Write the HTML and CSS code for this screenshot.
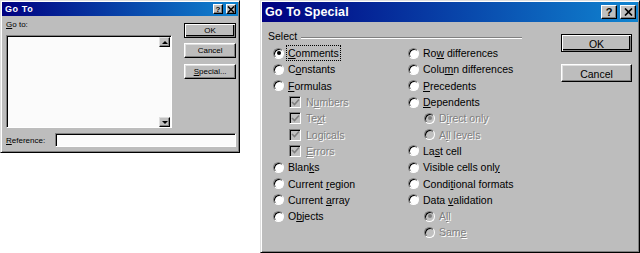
FILE: index.html
```html
<!doctype html>
<html lang="en">
<head>
  <title>Go To / Go To Special</title>
  <meta charset="utf-8">
  <link rel="stylesheet" href="styles.css">
</head>
<body>

<div class="screen">

  <div class="dlg goto">
    <div class="titlebar small-title">
      <span class="title">Go To</span>
      <span class="caps">
        <span class="cap help">?</span>
        <span class="cap"><svg width="8" height="7" viewBox="0 0 8 7"><path d="M1 0.5 L7 6.5 M7 0.5 L1 6.5" stroke="#000" stroke-width="1.6"/></svg></span>
      </span>
    </div>
    <div class="goto-body">
      <div class="goto-main">
        <div class="lbl"><u>G</u>o to:</div>
        <div class="listbox">
          <div class="list-area"></div>
          <div class="vscroll">
            <span class="sbtn"><span class="tri up"></span></span>
            <span class="track"></span>
            <span class="sbtn"><span class="tri down"></span></span>
          </div>
        </div>
      </div>
      <div class="btns small-btns">
        <div class="btn default">OK</div>
        <div class="btn">Cancel</div>
        <div class="btn"><u>S</u>pecial...</div>
      </div>
    </div>
    <div class="ref-row">
      <span class="ref-lbl"><u>R</u>eference:</span>
      <div class="field"></div>
    </div>
  </div>

  <div class="dlg special">
    <div class="titlebar big-title">
      <span class="title">Go To Special</span>
      <span class="caps">
        <span class="cap help">?</span>
        <span class="cap"><svg width="9" height="8" viewBox="0 0 9 8"><path d="M1 0.5 L8 7.5 M8 0.5 L1 7.5" stroke="#000" stroke-width="1.7"/></svg></span>
      </span>
    </div>
    <div class="special-body">
      <div class="select">
        <div class="group-head"><span>Select</span><span class="rule"></span></div>
        <div class="cols">
          <div class="col first">
            <div class="opt"><span class="radio on"></span><span class="focus"><u>C</u>omments</span></div>
            <div class="opt"><span class="radio"></span><span>C<u>o</u>nstants</span></div>
            <div class="opt"><span class="radio"></span><span><u>F</u>ormulas</span></div>
            <div class="opt sub"><span class="check"><svg width="9" height="9" viewBox="0 0 9 9"><path d="M1 4 L3.5 6.5 L8 1.5" fill="none" stroke="#808080" stroke-width="1.6"/></svg></span><span class="dis">N<u>u</u>mbers</span></div>
            <div class="opt sub"><span class="check"><svg width="9" height="9" viewBox="0 0 9 9"><path d="M1 4 L3.5 6.5 L8 1.5" fill="none" stroke="#808080" stroke-width="1.6"/></svg></span><span class="dis">Te<u>x</u>t</span></div>
            <div class="opt sub"><span class="check"><svg width="9" height="9" viewBox="0 0 9 9"><path d="M1 4 L3.5 6.5 L8 1.5" fill="none" stroke="#808080" stroke-width="1.6"/></svg></span><span class="dis">Lo<u>g</u>icals</span></div>
            <div class="opt sub"><span class="check"><svg width="9" height="9" viewBox="0 0 9 9"><path d="M1 4 L3.5 6.5 L8 1.5" fill="none" stroke="#808080" stroke-width="1.6"/></svg></span><span class="dis"><u>E</u>rrors</span></div>
            <div class="opt"><span class="radio"></span><span>Blan<u>k</u>s</span></div>
            <div class="opt"><span class="radio"></span><span>Current <u>r</u>egion</span></div>
            <div class="opt"><span class="radio"></span><span>Current <u>a</u>rray</span></div>
            <div class="opt"><span class="radio"></span><span>O<u>b</u>jects</span></div>
          </div>
          <div class="col">
            <div class="opt"><span class="radio"></span><span>Ro<u>w</u> differences</span></div>
            <div class="opt"><span class="radio"></span><span>Colu<u>m</u>n differences</span></div>
            <div class="opt"><span class="radio"></span><span><u>P</u>recedents</span></div>
            <div class="opt"><span class="radio"></span><span><u>D</u>ependents</span></div>
            <div class="opt sub"><span class="radio off on"></span><span class="dis">D<u>i</u>rect only</span></div>
            <div class="opt sub"><span class="radio off"></span><span class="dis">A<u>l</u>l levels</span></div>
            <div class="opt"><span class="radio"></span><span>La<u>s</u>t cell</span></div>
            <div class="opt"><span class="radio"></span><span>Visible cells onl<u>y</u></span></div>
            <div class="opt"><span class="radio"></span><span>Condi<u>t</u>ional formats</span></div>
            <div class="opt"><span class="radio"></span><span>Data <u>v</u>alidation</span></div>
            <div class="opt sub"><span class="radio off on"></span><span class="dis">A<u>l</u>l</span></div>
            <div class="opt sub"><span class="radio off"></span><span class="dis">Sam<u>e</u></span></div>
          </div>
        </div>
      </div>
      <div class="btns big-btns">
        <div class="btn default">OK</div>
        <div class="btn">Cancel</div>
      </div>
    </div>
  </div>

</div>

</body>
</html>
```

FILE: styles.css
```css
html {
  height: 100%;
}

body {
  margin: 0;
  padding: 0;
  background: #ffffff;
  color: #000000;
  font-family: "Liberation Sans", Arial, sans-serif;
}

u {
  text-decoration: underline;
  text-underline-offset: 1px;
}

.screen {
  display: flex;
  align-items: flex-start;
  gap: 20px;
}

/* window frame */
.dlg {
  box-sizing: border-box;
  background: #bdbdbd;
  border: 1px solid;
  border-color: #dfdfdf #000000 #000000 #dfdfdf;
  box-shadow: inset 1px 1px 0 #ffffff, inset -1px -1px 0 #808080;
  padding: 1px;
  display: flex;
  flex-direction: column;
}

.goto {
  width: 240px;
  height: 153px;
  font-size: 8px;
}

.special {
  width: 380px;
  height: 253px;
  font-size: 10.5px;
}

.titlebar {
  display: flex;
  align-items: center;
  justify-content: space-between;
  background: linear-gradient(to right, #000080, #1084d0);
  color: #ffffff;
  font-weight: bold;
}

.small-title {
  height: 14px;
  padding: 0 2px 0 3px;
  font-size: 9px;
  letter-spacing: 0.6px;
}

.big-title {
  height: 20px;
  padding: 0 2px 0 3px;
  font-size: 12.5px;
  letter-spacing: 0.1px;
}

.caps {
  display: flex;
  gap: 3px;
}

.cap {
  box-sizing: border-box;
  display: flex;
  align-items: center;
  justify-content: center;
  background: #c0c0c0;
  color: #000000;
  border: 1px solid;
  border-color: #ffffff #000000 #000000 #ffffff;
  box-shadow: inset -1px -1px 0 #808080;
  letter-spacing: 0;
}

.small-title .cap {
  width: 10px;
  height: 10px;
  font-size: 8px;
}

.big-title .cap {
  width: 16px;
  height: 14px;
  font-size: 11px;
}

/* buttons */
.btns {
  display: flex;
  flex-direction: column;
}

.btn {
  box-sizing: border-box;
  display: flex;
  align-items: center;
  justify-content: center;
  border: 1px solid;
  border-color: #ffffff #000000 #000000 #ffffff;
  box-shadow: inset -1px -1px 0 #808080, inset 1px 1px 0 #dfdfdf;
}

.btn.default {
  border: 1px solid #000000;
  box-shadow: inset 1px 1px 0 #ffffff, inset -1px -1px 0 #808080, inset -2px -2px 0 #000000;
}

.small-btns {
  width: 52px;
  margin-left: 12px;
  margin-top: 7px;
  gap: 5px;
}

.small-btns .btn {
  height: 15px;
}

.small-btns .btn:last-child {
  margin-top: 1px;
}

.big-btns {
  width: 71px;
  margin-left: auto;
  margin-top: 12px;
  gap: 12px;
}

.big-btns .btn {
  height: 18px;
  padding-top: 2px;
}

/* Go To */
.goto-body {
  display: flex;
  padding: 0 2px 0 4px;
}

.goto-main {
  width: 167px;
}

.lbl {
  margin-top: 4px;
  line-height: 10px;
  height: 10px;
}

.listbox {
  box-sizing: border-box;
  margin-top: 5px;
  height: 93px;
  display: flex;
  border: 1px solid;
  border-color: #808080 #ffffff #ffffff #808080;
  box-shadow: inset 1px 1px 0 #000000;
  background: #fbfbfb;
  padding: 1px 1px 0 1px;
}

.list-area {
  flex: 1;
}

.vscroll {
  width: 11px;
  display: flex;
  flex-direction: column;
}

.sbtn {
  box-sizing: border-box;
  height: 10px;
  background: #c0c0c0;
  border: 1px solid;
  border-color: #dfdfdf #000000 #000000 #dfdfdf;
  box-shadow: inset -1px -1px 0 #808080;
  display: flex;
  align-items: center;
  justify-content: center;
}

.track {
  flex: 1;
}

.tri {
  width: 0;
  height: 0;
  border-left: 3px solid transparent;
  border-right: 3px solid transparent;
}

.tri.up {
  border-bottom: 3px solid #000000;
}

.tri.down {
  border-top: 3px solid #000000;
}

.ref-row {
  display: flex;
  align-items: center;
  margin-top: 5px;
  padding-left: 4px;
}

.ref-lbl {
  width: 49px;
}

.field {
  box-sizing: border-box;
  width: 181px;
  height: 14px;
  background: #fbfbfb;
  border: 1px solid;
  border-color: #808080 #ffffff #ffffff #808080;
  box-shadow: inset 1px 1px 0 #000000;
}

/* Go To Special */
.special-body {
  display: flex;
  padding: 0 6px;
}

.select {
  width: 254px;
}

.group-head {
  display: flex;
  align-items: center;
  margin-top: 8px;
  height: 12px;
  line-height: 12px;
}

.rule {
  flex: 1;
  margin-left: 4px;
  margin-top: 3px;
  border-top: 1px solid #808080;
  border-bottom: 1px solid #ffffff;
}

.cols {
  display: flex;
  margin-top: 3px;
  padding-left: 5px;
}

.col.first {
  width: 135px;
}

.opt {
  display: flex;
  align-items: center;
  height: 16.3px;
  white-space: nowrap;
}

.opt.sub {
  padding-left: 16px;
}

.radio {
  box-sizing: border-box;
  width: 11px;
  height: 11px;
  margin-right: 4px;
  border-radius: 50%;
  background: #ffffff;
  border: 1px solid;
  border-color: #808080 #ffffff #ffffff #808080;
  box-shadow: inset 1px 1px 0 #000000;
  display: flex;
  align-items: center;
  justify-content: center;
}

.radio.on::after {
  content: "";
  width: 4px;
  height: 4px;
  border-radius: 50%;
  background: #000000;
}

.radio.off {
  background: #c0c0c0;
}

.radio.off.on::after {
  background: #808080;
}

.check {
  box-sizing: border-box;
  width: 12px;
  height: 12px;
  margin-right: 5px;
  background: #c0c0c0;
  border: 1px solid;
  border-color: #808080 #ffffff #ffffff #808080;
  box-shadow: inset 1px 1px 0 #000000;
  display: flex;
  align-items: center;
  justify-content: center;
}

.dis {
  color: #808080;
  text-shadow: 1px 1px 0 #ffffff;
}

.focus {
  outline: 1px dotted #000000;
  outline-offset: 1px;
}
```
